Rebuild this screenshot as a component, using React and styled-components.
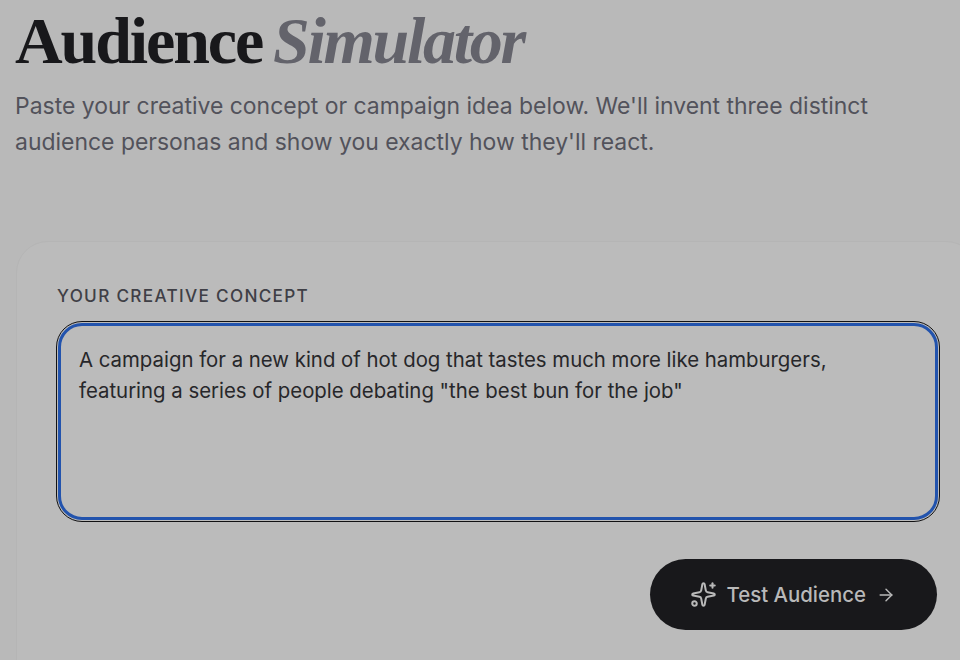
import React from "react";
import styled, { createGlobalStyle } from "styled-components";
import { Sparkles, ArrowRight } from "lucide-react";

const GlobalStyle = createGlobalStyle`
  html, body {
    margin: 0;
    height: 100%;
    overflow: hidden;
    background: #b9b9b9;
  }
  * {
    box-sizing: border-box;
  }
`;

const App = () => {
  return (
    <Page>
      <GlobalStyle />
      <Header>
        <Title>
          Audience <TitleAccent>Simulator</TitleAccent>
        </Title>
        <Subtitle>
          Paste your creative concept or campaign idea below. We'll invent three
          distinct audience personas and show you exactly how they'll react.
        </Subtitle>
      </Header>
      <Card>
        <Label htmlFor="concept">Your Creative Concept</Label>
        <ConceptInput
          id="concept"
          readOnly
          value={
            'A campaign for a new kind of hot dog that tastes much more like hamburgers, featuring a series of people debating "the best bun for the job"'
          }
        />
        <Actions>
          <TestButton>
            <Sparkles size={27} strokeWidth={1.8} />
            Test Audience
            <Arrow size={20} strokeWidth={1.7} />
          </TestButton>
        </Actions>
      </Card>
    </Page>
  );
};

const Page = styled.div`
  width: 978px;
  height: 660px;
  overflow: hidden;
  padding-left: 16px;
  font-family: Inter, "Noto Sans", sans-serif;
`;

const Header = styled.div`
  padding-top: 5px;
  height: 241px;
`;

const Title = styled.h1`
  margin: 0 0 0 -1px;
  font-family: "Liberation Serif", "DejaVu Serif", serif;
  font-size: 66px;
  line-height: 72px;
  font-weight: 700;
  letter-spacing: -2.1px;
  word-spacing: -3.5px;
  color: #18181b;
  white-space: nowrap;
`;

const TitleAccent = styled.em`
  font-weight: 700;
  color: #63636b;
  letter-spacing: -2.3px;
`;

const Subtitle = styled.p`
  margin: 11px 0 0 -1px;
  width: 900px;
  font-size: 22.95px;
  line-height: 36px;
  color: #52525b;
`;

const Card = styled.div`
  height: 460px;
  padding: 42px 40px 0 40px;
  border: 1.5px solid #b5b5b5;
  border-radius: 32px;
  background: #bbbbbb;
`;

const Label = styled.label`
  display: block;
  font-size: 17.2px;
  line-height: 24px;
  font-weight: 500;
  letter-spacing: 1.3px;
  text-transform: uppercase;
  color: #3f3f46;
`;

const ConceptInput = styled.textarea`
  display: block;
  width: 880px;
  height: 197px;
  margin: 15px 0 0 1px;
  padding: 19px 40px 19px 18px;
  border: 3px solid #2253ad;
  border-radius: 24px;
  outline: 1px solid #111113;
  outline-offset: 1px;
  background: transparent;
  resize: none;
  font-family: inherit;
  font-size: 20.36px;
  line-height: 30.5px;
  color: #27272a;
`;

const Actions = styled.div`
  display: flex;
  justify-content: flex-end;
  width: 880px;
  margin-top: 39px;
`;

const TestButton = styled.button`
  display: flex;
  align-items: center;
  gap: 9px;
  height: 71px;
  padding: 0 41px 0 40px;
  border: 0;
  border-radius: 36px;
  background: #18181b;
  font-family: inherit;
  font-size: 20.4px;
  font-weight: 500;
  color: #b9b9b9;
`;

const Arrow = styled(ArrowRight)`
  margin-left: 1px;
`;

export default App;
